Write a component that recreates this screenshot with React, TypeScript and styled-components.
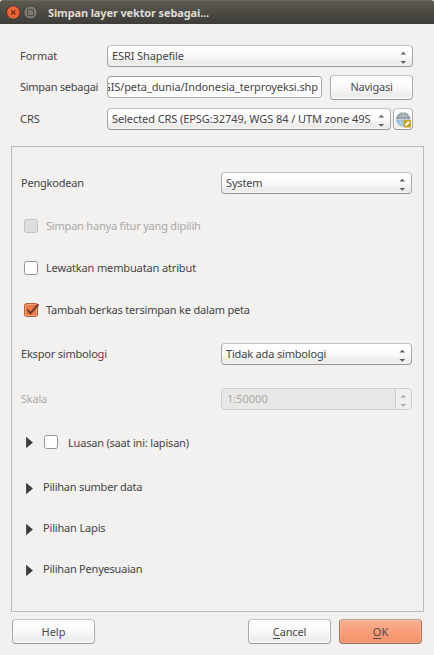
import React from 'react';
import styled, { createGlobalStyle } from 'styled-components';

const GlobalStyle = createGlobalStyle`
  * { box-sizing: border-box; }
  body {
    margin: 0;
    background: #f2f1f0;
    font-family: "Noto Sans", "Open Sans", sans-serif;
    font-size: 11px;
    color: #454545;
    overflow: hidden;
  }
`;

const Dialog = styled.main`
  width: 434px;
  height: 655px;
  display: flex;
  flex-direction: column;
  background: #f2f1f0;
`;

const TitleBar = styled.header`
  height: 24px;
  flex: none;
  display: flex;
  align-items: center;
  padding-left: 6px;
  border-radius: 3px 3px 0 0;
  border-top: 1px solid #6b675d;
  background: linear-gradient(#5c594f, #3d3c38);
`;

const TitleIcons = styled.svg`
  width: 32px;
  height: 16px;
  margin-right: 10px;
`;

const Text = styled.span<{ $track?: number; $muted?: boolean }>`
  white-space: pre;
  line-height: 16px;
  letter-spacing: ${(p) => p.$track ?? 0}px;
  color: ${(p) => (p.$muted ? '#aaa8a6' : 'inherit')};
`;

const Title = styled(Text)`
  font-weight: 700;
  color: #dfdbd2;
`;

const Row = styled.div<{ $gap: number }>`
  height: 22px;
  margin-top: ${(p) => p.$gap}px;
  display: flex;
  align-items: center;
`;

const TopForm = styled.section`
  flex: none;
  height: 122px;
  padding: 0 21px 0 20px;
  overflow: hidden;
`;

const Label = styled.div<{ $width: number }>`
  width: ${(p) => p.$width}px;
  flex: none;
  display: flex;
`;

const Control = styled.div<{ $width: number; $disabled?: boolean }>`
  width: ${(p) => p.$width}px;
  height: 22px;
  flex: none;
  display: flex;
  align-items: center;
  justify-content: space-between;
  padding: 0 5px 0 4px;
  border: 1px solid;
  border-color: ${(p) => (p.$disabled ? '#cfcdcb' : '#c3c1be #aaa8a5 #999794 #aaa8a5')};
  border-radius: 4px;
  background: ${(p) =>
    p.$disabled ? '#e9e8e7' : 'linear-gradient(#ffffff, #fafafa 50%, #ebeae9 85%, #f3f3f2)'};
`;

const Clip = styled.div`
  flex: 1;
  min-width: 0;
  display: flex;
  overflow: hidden;
  margin-right: 7px;
`;

const PathInput = styled(Control)`
  padding: 0 3px 0 0;
  background: #fff;
  border-color: #999794 #aaa8a5 #b0aeab;
`;

const PathClip = styled(Clip)`
  justify-content: flex-end;
  margin-right: 0;
`;

const SpinBox = styled(Control)`
  padding: 0 0 0 5px;
`;

const Stepper = styled.div`
  width: 16px;
  height: 20px;
  display: flex;
  align-items: center;
  justify-content: center;
  border-left: 1px solid #cfcdcb;
  border-radius: 0 3px 3px 0;
  background: #f0efee;
`;

const ArrowSvg = styled.svg`
  width: 7px;
  height: 14px;
  flex: none;
  margin-top: 3px;
`;

const Button = styled.button<{ $primary?: boolean }>`
  width: 83px;
  height: 25px;
  flex: none;
  display: flex;
  align-items: center;
  justify-content: center;
  padding: 0;
  font: inherit;
  color: #4a4a4a;
  border: 1px solid;
  border-color: ${(p) => (p.$primary ? '#b79b8f #a2755f #94705f' : '#c5c3c0 #aaa8a5 #9b9996')};
  border-radius: 4px;
  background: ${(p) =>
    p.$primary
      ? 'linear-gradient(#fbb091, #f8a07c 45%, #f49069)'
      : 'linear-gradient(#ffffff, #fafafa 45%, #ececeb 85%, #f4f4f3)'};
  box-shadow: inset 0 0 0 1px ${(p) => (p.$primary ? '#ffffff30' : '#ffffffa0')};
`;

const IconButton = styled(Button)`
  width: 20px;
  height: 22px;
`;

const Globe = styled.svg`
  width: 17px;
  height: 17px;
  flex: none;
`;

const Mnemonic = styled.span`
  border-bottom: 1px solid #4a4a4a;
  display: inline-block;
  line-height: 13px;
`;

const Options = styled.section`
  width: 413px;
  height: 466px;
  flex: none;
  margin-left: 11px;
  padding-left: 9px;
  border: 1px solid #bcbab8;
  overflow: hidden;
`;

const CheckSvg = styled.svg`
  width: 18px;
  height: 18px;
  flex: none;
`;

const CheckRow = styled(Row)`
  padding-left: 1px;
  gap: 6px;
`;

const GroupRow = styled(Row)`
  padding-left: 5px;
`;

const Triangle = styled.svg<{ $drop?: number }>`
  width: 8px;
  height: 13px;
  flex: none;
  margin: ${(p) => p.$drop ?? 0}px 9px 0 0;
`;

const GroupCheck = styled.div`
  display: flex;
  align-items: flex-end;
  gap: 8px;
  margin-left: -1px;
`;

const Footer = styled.footer`
  display: flex;
  gap: 8px;
  padding: 7px 12px 0;
`;

const Spacer = styled.div`
  flex: 1;
`;

function Arrows({ muted }: { muted?: boolean }) {
  return (
    <ArrowSvg viewBox="0 0 7 14">
      <path d="M3.3.8 6.1 3.6H.5ZM3.3 12.8.5 10h5.6Z" fill={muted ? '#aaa8a6' : '#5f5e5c'} />
    </ArrowSvg>
  );
}

function Select({ width, value, track }: { width: number; value: string; track?: number }) {
  return (
    <Control $width={width}>
      <Clip>
        <Text $track={track}>{value}</Text>
      </Clip>
      <Arrows />
    </Control>
  );
}

function Check({ state }: { state: 'off' | 'on' | 'disabled' }) {
  const fill = state === 'on' ? '#f07746' : state === 'disabled' ? '#dfdedd' : '#fff';
  const stroke = state === 'on' ? '#b0603e' : state === 'disabled' ? '#c2c0be' : '#969492';
  return (
    <CheckSvg viewBox="0 0 18 18">
      <rect x="2.5" y="2.5" width="13" height="13" rx="2" fill={fill} stroke={stroke} />
      {state === 'on' && (
        <>
          <rect x="3.5" y="3.5" width="11" height="11" rx="1" fill="none" stroke="#f9a07c" />
          <path d="M5.2 8.5 8.4 12.2 16.5 3.4" fill="none" stroke="#6b3a28" strokeWidth="1.9" />
        </>
      )}
    </CheckSvg>
  );
}

function Expander({ drop }: { drop?: number }) {
  return (
    <Triangle $drop={drop} viewBox="0 0 8 13">
      <path d="M.1.7 6.9 6.5.1 12.3Z" fill="#3c3c3c" />
    </Triangle>
  );
}

export default function App() {
  return (
    <>
      <GlobalStyle />
      <Dialog>
        <TitleBar>
          <TitleIcons viewBox="0 0 32 16">
            <circle cx="7.3" cy="7.4" r="6.7" fill="#ed6336" stroke="#35332f" strokeWidth=".8" />
            <path d="m5.2 5.3 4.2 4.2m0-4.2L5.2 9.5" stroke="#642711" strokeWidth="1.2" />
            <circle cx="24.5" cy="7.4" r="6.7" fill="#7b7970" stroke="#35332f" strokeWidth=".8" />
            <rect x="21.5" y="4.5" width="6" height="6" rx=".5" fill="none" stroke="#4b4a44" />
          </TitleIcons>
          <Title $track={-0.13}>Simpan layer vektor sebagai...</Title>
        </TitleBar>

        <TopForm>
          <Row $gap={21}>
            <Label $width={87}><Text>Format</Text></Label>
            <Select width={306} value="ESRI Shapefile" track={-0.1} />
          </Row>
          <Row $gap={9}>
            <Label $width={87}><Text $track={-0.27}>Simpan sebagai</Text></Label>
            <PathInput $width={215}>
              <PathClip>
                <Text $track={-0.1}>GIS/peta_dunia/Indonesia_terproyeksi.shp</Text>
              </PathClip>
            </PathInput>
            <Spacer />
            <Button><Text $track={-0.25}>Navigasi</Text></Button>
          </Row>
          <Row $gap={10}>
            <Label $width={87}><Text>CRS</Text></Label>
            <Select
              width={284}
              value="Selected CRS (EPSG:32749, WGS 84 / UTM zone 49S)"
              track={-0.08}
            />
            <Spacer />
            <IconButton aria-label="CRS">
              <Globe viewBox="0 0 17 17">
                <path d="M1 8.5a7.2 7.2 0 0 1 14.4 0Z" fill="#8e979e" />
                <path d="M1 8.5a7.2 7.2 0 0 0 14.4 0Z" fill="#91bde3" />
                <path
                  d="M8.2 1.3v14M1 8.5h14.4M2.4 5h11.6M2.4 12h11.6M8.2 1.3q-7 7 0 14M8.2 1.3q7 7 0 14"
                  fill="none"
                  stroke="#dce3e8"
                  strokeWidth=".5"
                />
                <rect x="8.5" y="9" width="7.5" height="7.5" rx="1" fill="#c9a31c" />
                <path d="m10.5 14.5 3.6-3.8" stroke="#fff" strokeWidth="2" />
              </Globe>
            </IconButton>
          </Row>
        </TopForm>

        <Options>
          <Row $gap={25}>
            <Label $width={200}><Text $track={-0.2}>Pengkodean</Text></Label>
            <Select width={191} value="System" track={-0.15} />
          </Row>
          <CheckRow $gap={21}>
            <Check state="disabled" />
            <Text $muted $track={-0.2}>Simpan hanya fitur yang dipilih</Text>
          </CheckRow>
          <CheckRow $gap={20}>
            <Check state="off" />
            <Text $track={-0.14}>Lewatkan membuatan atribut</Text>
          </CheckRow>
          <CheckRow $gap={20}>
            <Check state="on" />
            <Text $track={-0.19}>Tambah berkas tersimpan ke dalam peta</Text>
          </CheckRow>
          <Row $gap={22}>
            <Label $width={200}><Text $track={-0.2}>Ekspor simbologi</Text></Label>
            <Select width={191} value="Tidak ada simbologi" track={-0.17} />
          </Row>
          <Row $gap={23}>
            <Label $width={200}><Text $muted $track={-0.2}>Skala</Text></Label>
            <SpinBox $width={191} $disabled>
              <Text $muted>1:50000</Text>
              <Stepper><Arrows muted /></Stepper>
            </SpinBox>
          </Row>
          <GroupRow $gap={21}>
            <Expander />
            <GroupCheck>
              <Check state="off" />
              <Text $track={-0.2}>Luasan (saat ini: lapisan)</Text>
            </GroupCheck>
          </GroupRow>
          <GroupRow $gap={23}>
            <Expander drop={3} />
            <Text $track={-0.23}>Pilihan sumber data</Text>
          </GroupRow>
          <GroupRow $gap={19}>
            <Expander drop={3} />
            <Text $track={-0.17}>Pilihan Lapis</Text>
          </GroupRow>
          <GroupRow $gap={19}>
            <Expander drop={3} />
            <Text $track={-0.21}>Pilihan Penyesuaian</Text>
          </GroupRow>
        </Options>

        <Footer>
          <Button><Text>Help</Text></Button>
          <Spacer />
          <Button><Text $track={-0.15}><Mnemonic>C</Mnemonic>ancel</Text></Button>
          <Button $primary><Text><Mnemonic>O</Mnemonic>K</Text></Button>
        </Footer>
      </Dialog>
    </>
  );
}
